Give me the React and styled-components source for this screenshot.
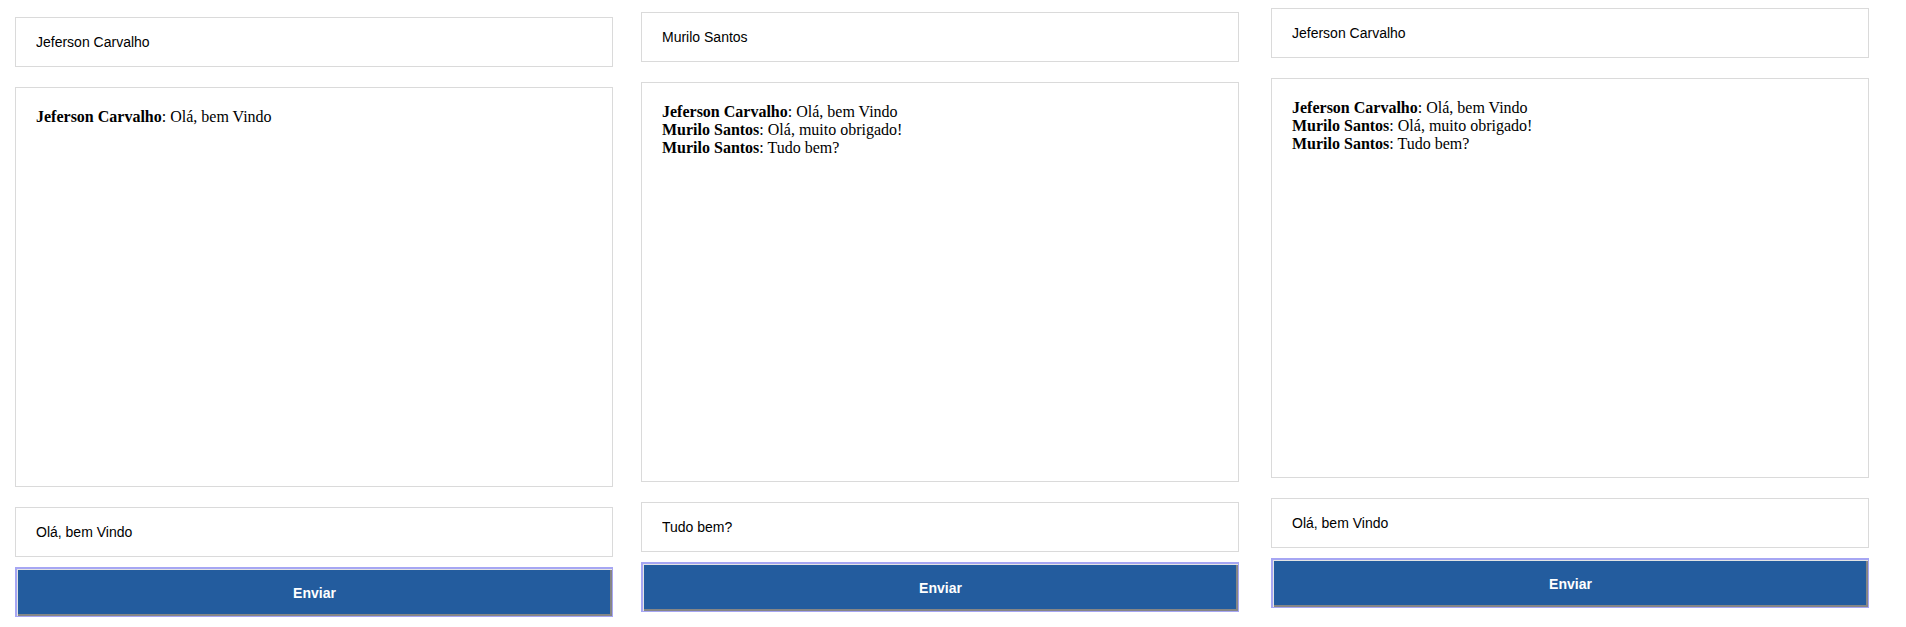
import React from 'react'
import styled, { createGlobalStyle } from 'styled-components'

const GlobalStyle = createGlobalStyle`
  body {
    margin: 0;
    background: #fff;
    font-family: "Liberation Serif", "Times New Roman", serif;
  }
`

const Page = styled.div`
  display: flex;
  align-items: flex-start;
  padding-left: 15px;
`

const ChatWindow = styled.div`
  display: flex;
  flex-direction: column;
  width: 598px;
  margin-top: ${p => p.$top}px;
  margin-left: ${p => p.$left}px;
`

const TextField = styled.input`
  box-sizing: border-box;
  display: block;
  width: 100%;
  height: 50px;
  margin: 0 0 ${p => p.$gap}px;
  padding: 0 20px;
  border: 1px solid #dadada;
  background: #fff;
  color: #000;
  font: 14px "Liberation Sans", Arial, sans-serif;
  outline: none;
`

const MessageBox = styled.div`
  box-sizing: border-box;
  height: 400px;
  margin-bottom: 20px;
  padding: 20px;
  border: 1px solid #dadada;
  font-size: 16px;
  line-height: normal;
  color: #000;
`

const Line = styled.div``

const Author = styled.strong`
  font-weight: bold;
`

const SendButton = styled.button`
  box-sizing: border-box;
  width: 100%;
  height: 50px;
  padding: 0;
  background: #235c9e;
  color: #fff;
  font: bold 14px "Liberation Sans", Arial, sans-serif;
  border-style: solid;
  border-color: #a6a6f3;
  border-width: 2px 1px 1px 2px;
  box-shadow: inset 1px 1px 0 #e4e4e4, inset -2px -2px 0 #868686;
  cursor: pointer;
`

const JEF = 'Jeferson Carvalho'
const MUR = 'Murilo Santos'

const conversation = [
  [JEF, 'Olá, bem Vindo'],
  [MUR, 'Olá, muito obrigado!'],
  [MUR, 'Tudo bem?'],
]

const windows = [
  { top: 17, left: 0, name: JEF, messages: conversation.slice(0, 1), draft: 'Olá, bem Vindo' },
  { top: 12, left: 28, name: MUR, messages: conversation, draft: 'Tudo bem?' },
  { top: 8, left: 32, name: JEF, messages: conversation, draft: 'Olá, bem Vindo' },
]

const Chat = ({ top, left, name, messages, draft }) => (
  <ChatWindow $top={top} $left={left}>
    <TextField $gap={20} defaultValue={name} readOnly />
    <MessageBox>
      {messages.map(([author, text], i) => (
        <Line key={i}>
          <Author>{author}</Author>: {text}
        </Line>
      ))}
    </MessageBox>
    <TextField $gap={10} defaultValue={draft} readOnly />
    <SendButton>Enviar</SendButton>
  </ChatWindow>
)

const App = () => (
  <>
    <GlobalStyle />
    <Page>
      {windows.map((w, i) => (
        <Chat key={i} {...w} />
      ))}
    </Page>
  </>
)

export default App
